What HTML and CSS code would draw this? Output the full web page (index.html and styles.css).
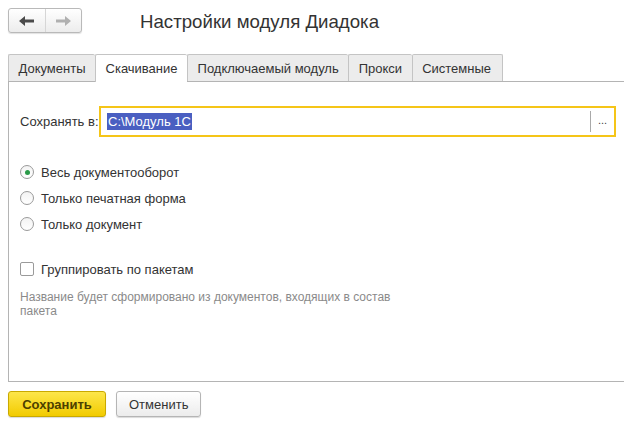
FILE: index.html
```html
<!DOCTYPE html>
<html lang="ru">
<head>
<meta charset="utf-8">
<link rel="stylesheet" href="styles.css">
</head>
<body>
<div class="page">
  <header class="top">
    <div class="nav">
      <button class="nav-btn" aria-label="Назад">
        <svg width="16" height="10" viewBox="0 0 16 10"><path d="M0 5 L6 0 L6 3.5 L15 3.5 L15 6.5 L6 6.5 L6 10 Z" fill="#4a4a4a"/></svg>
      </button>
      <button class="nav-btn" aria-label="Вперёд">
        <svg width="16" height="10" viewBox="0 0 16 10"><path d="M16 5 L10 0 L10 3.5 L1 3.5 L1 6.5 L10 6.5 L10 10 Z" fill="#b0b0b0"/></svg>
      </button>
    </div>
    <h1 class="title">Настройки модуля Диадока</h1>
  </header>

  <div class="tabs">
    <div class="tab">Документы</div>
    <div class="tab active">Скачивание</div>
    <div class="tab">Подключаемый модуль</div>
    <div class="tab">Прокси</div>
    <div class="tab">Системные</div>
  </div>

  <div class="panel">
    <div class="field">
      <span class="label">Сохранять в:</span>
      <div class="input">
        <span class="value"><span class="sel">C:\Модуль 1С</span></span>
        <span class="choose">...</span>
      </div>
    </div>

    <div class="radios">
      <div class="radio-row"><span class="radio checked"></span>Весь документооборот</div>
      <div class="radio-row"><span class="radio"></span>Только печатная форма</div>
      <div class="radio-row"><span class="radio"></span>Только документ</div>
    </div>

    <div class="check-row"><span class="checkbox"></span>Группировать по пакетам</div>
    <p class="hint">Название будет сформировано из документов, входящих в состав<br>пакета</p>
  </div>

  <div class="actions">
    <button class="btn primary">Сохранить</button>
    <button class="btn">Отменить</button>
  </div>
</div>
</body>
</html>
```

FILE: styles.css
```css
* { box-sizing: border-box; }
html, body { margin: 0; padding: 0; background: #fff; }
body {
  font-family: "Liberation Sans", Arial, sans-serif;
  font-size: 13px;
  color: #333;
  overflow: hidden;
  width: 624px;
  height: 426px;
}
.page { padding: 8px 0 0 8px; }

.top { display: flex; align-items: center; height: 25px; }
.nav {
  display: flex;
  width: 74px;
  height: 25px;
  border: 1px solid #b9b9b9;
  border-radius: 3px;
  background: linear-gradient(#ffffff, #ececec);
  box-shadow: 0 1px 1px rgba(0,0,0,0.12);
}
.nav-btn {
  flex: 1;
  border: 0;
  background: transparent;
  padding: 0;
  display: flex;
  align-items: center;
  justify-content: center;
}
.nav-btn + .nav-btn { border-left: 1px solid #d6d6d6; }

.title {
  margin: 0 0 0 58px;
  font-size: 18.67px;
  font-weight: normal;
  color: #333;
  position: relative;
  top: 1px;
}

.tabs { display: flex; margin-top: 20px; height: 28px; align-items: flex-end; }
.tab {
  height: 27px;
  padding: 0 9.5px;
  display: flex;
  align-items: center;
  background: #ececec;
  border: 1px solid #c4c4c4;
  border-bottom: 0;
  border-right: 0;
  color: #333;
  border-radius: 2px 2px 0 0;
}
.tab:last-child { border-right: 1px solid #c4c4c4; padding-right: 11px; }
.tab.active {
  background: #fff;
  height: 28px;
  margin-bottom: -1px;
  position: relative;
  padding: 0 9.5px;
}

.panel {
  border: 1px solid #b4b4b4;
  border-right: 0;
  height: 301px;
  padding: 24px 0 0 11px;
}

.field { display: flex; align-items: center; height: 31px; }
.label { width: 79px; color: #333; }
.input {
  display: flex;
  align-items: center;
  width: 517px;
  height: 31px;
  border: 2px solid #f5c518;
  background: #fff;
}
.value { flex: 1; padding-left: 6px; }
.sel { background: #4a5fc1; color: #fff; padding: 1px 1px; }
.choose {
  width: 24px;
  height: 21px;
  border-left: 1px solid #a9a9a9;
  display: flex;
  align-items: center;
  justify-content: center;
  color: #444;
  font-size: 11px;
  line-height: 1;
  padding-bottom: 2px;
}

.radios { margin-top: 26px; display: flex; flex-direction: column; gap: 8px; }
.radio-row, .check-row { display: flex; align-items: center; height: 18px; color: #333; }
.radio {
  width: 14px;
  height: 14px;
  border: 1px solid #9a9a9a;
  border-radius: 50%;
  margin-right: 7px;
  background: linear-gradient(#f3f3f3, #fff);
  display: flex;
  align-items: center;
  justify-content: center;
}
.radio.checked::after {
  content: "";
  width: 5px;
  height: 5px;
  border-radius: 50%;
  background: #2a9a48;
}

.check-row { margin-top: 27px; }
.checkbox {
  width: 14px;
  height: 14px;
  border: 1px solid #9a9a9a;
  border-radius: 2px;
  margin-right: 7px;
  background: #fff;
}

.hint {
  margin: 12px 0 0 0;
  font-size: 12px;
  line-height: 14px;
  color: #8a8a8a;
}

.actions { display: flex; gap: 10px; margin-top: 9px; }
.btn {
  height: 26px;
  padding: 0 12px;
  font-family: "Liberation Sans", Arial, sans-serif;
  font-size: 13px;
  border: 1px solid #b5b5b5;
  border-radius: 3px;
  background: linear-gradient(#ffffff, #ececec);
  color: #333;
  box-shadow: 0 1px 1px rgba(0,0,0,0.15);
  min-width: 84px;
}
.btn.primary {
  background: linear-gradient(#fde64b, #f2cb00);
  border-color: #c9a900;
  font-weight: bold;
  color: #4d4000;
  width: 98px;
}
```
